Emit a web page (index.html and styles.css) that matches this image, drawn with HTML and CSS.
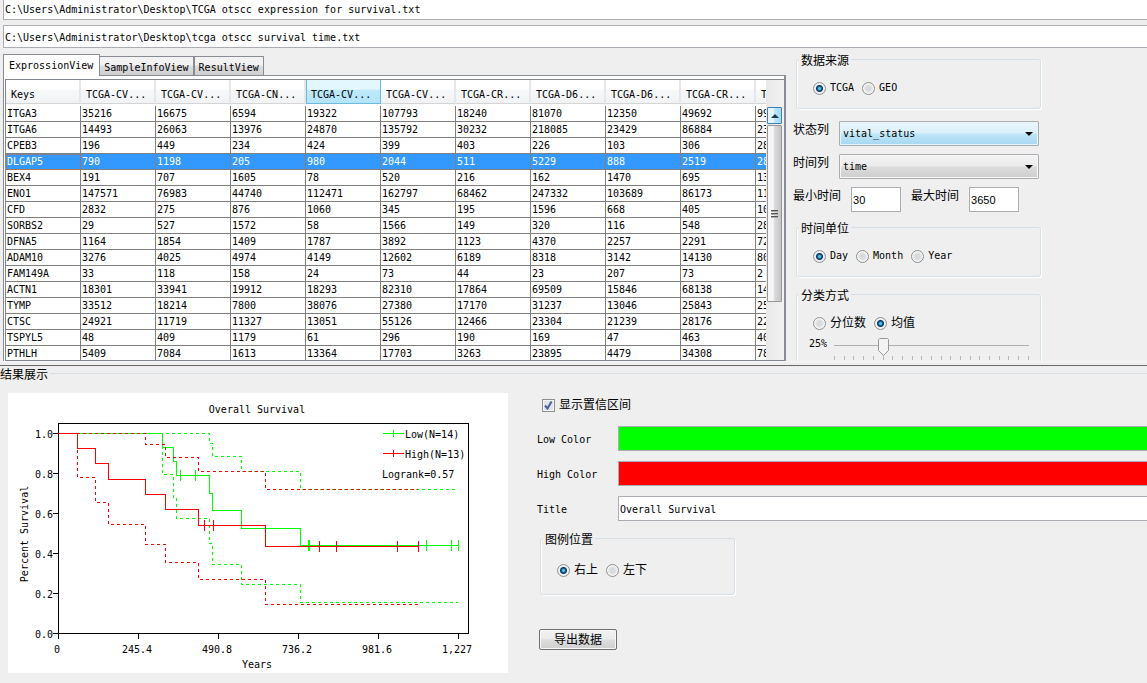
FILE: index.html
```html
<!DOCTYPE html>
<html lang="zh-CN">
<head>
<meta charset="utf-8">
<title>Survival Analysis</title>
<link rel="stylesheet" href="styles.css">
</head>
<body>
<section class="upper">
  <div class="paths">
    <input class="field path" type="text" aria-label="Expression file" value="C:\Users\Administrator\Desktop\TCGA otscc expression for survival.txt">
    <input class="field path" type="text" aria-label="Survival time file" value="C:\Users\Administrator\Desktop\tcga otscc survival time.txt">
  </div>
  <div class="workspace">
    <div class="tabs">
      <div class="tablist" role="tablist">
        <button class="tab active" role="tab" aria-selected="true">ExprossionView</button>
        <button class="tab" role="tab">SampleInfoView</button>
        <button class="tab" role="tab">ResultView</button>
      </div>
      <div class="tabpanel" role="tabpanel">
        <div class="grid">
          <div class="view">
            <table class="data">
              <thead><tr><th>Keys</th><th>TCGA-CV...</th><th>TCGA-CV...</th><th>TCGA-CN...</th><th class="hot">TCGA-CV...</th><th>TCGA-CV...</th><th>TCGA-CR...</th><th>TCGA-D6...</th><th>TCGA-D6...</th><th>TCGA-CR...</th><th>T</th></tr></thead>
              <tbody>
              <tr><td>ITGA3</td><td>35216</td><td>16675</td><td>6594</td><td>19322</td><td>107793</td><td>18240</td><td>81070</td><td>12350</td><td>49692</td><td>99</td></tr>
              <tr><td>ITGA6</td><td>14493</td><td>26063</td><td>13976</td><td>24870</td><td>135792</td><td>30232</td><td>218085</td><td>23429</td><td>86884</td><td>23</td></tr>
              <tr><td>CPEB3</td><td>196</td><td>449</td><td>234</td><td>424</td><td>399</td><td>403</td><td>226</td><td>103</td><td>306</td><td>28</td></tr>
              <tr class="selected"><td class="focus">DLGAP5</td><td>790</td><td>1198</td><td>205</td><td>980</td><td>2044</td><td>511</td><td>5229</td><td>888</td><td>2519</td><td>28</td></tr>
              <tr><td>BEX4</td><td>191</td><td>707</td><td>1605</td><td>78</td><td>520</td><td>216</td><td>162</td><td>1470</td><td>695</td><td>13</td></tr>
              <tr><td>ENO1</td><td>147571</td><td>76983</td><td>44740</td><td>112471</td><td>162797</td><td>68462</td><td>247332</td><td>103689</td><td>86173</td><td>11</td></tr>
              <tr><td>CFD</td><td>2832</td><td>275</td><td>876</td><td>1060</td><td>345</td><td>195</td><td>1596</td><td>668</td><td>405</td><td>10</td></tr>
              <tr><td>SORBS2</td><td>29</td><td>527</td><td>1572</td><td>58</td><td>1566</td><td>149</td><td>320</td><td>116</td><td>548</td><td>28</td></tr>
              <tr><td>DFNA5</td><td>1164</td><td>1854</td><td>1409</td><td>1787</td><td>3892</td><td>1123</td><td>4370</td><td>2257</td><td>2291</td><td>72</td></tr>
              <tr><td>ADAM10</td><td>3276</td><td>4025</td><td>4974</td><td>4149</td><td>12602</td><td>6189</td><td>8318</td><td>3142</td><td>14130</td><td>80</td></tr>
              <tr><td>FAM149A</td><td>33</td><td>118</td><td>158</td><td>24</td><td>73</td><td>44</td><td>23</td><td>207</td><td>73</td><td>2</td></tr>
              <tr><td>ACTN1</td><td>18301</td><td>33941</td><td>19912</td><td>18293</td><td>82310</td><td>17864</td><td>69509</td><td>15846</td><td>68138</td><td>14</td></tr>
              <tr><td>TYMP</td><td>33512</td><td>18214</td><td>7800</td><td>38076</td><td>27380</td><td>17170</td><td>31237</td><td>13046</td><td>25843</td><td>25</td></tr>
              <tr><td>CTSC</td><td>24921</td><td>11719</td><td>11327</td><td>13051</td><td>55126</td><td>12466</td><td>23304</td><td>21239</td><td>28176</td><td>22</td></tr>
              <tr><td>TSPYL5</td><td>48</td><td>409</td><td>1179</td><td>61</td><td>296</td><td>190</td><td>169</td><td>47</td><td>463</td><td>40</td></tr>
              <tr><td>PTHLH</td><td>5409</td><td>7084</td><td>1613</td><td>13364</td><td>17703</td><td>3263</td><td>23895</td><td>4479</td><td>34308</td><td>78</td></tr>
              </tbody>
            </table>
          </div>
          <div class="scrollbar">
            <button class="scroll-up" aria-label="Scroll up"><svg width="8" height="4" viewBox="0 0 8 4"><path d="M0 4L4 0l4 4z" fill="#1c3a52"/></svg></button>
            <div class="scroll-thumb"><svg width="7" height="8" viewBox="0 0 7 8"><path d="M0 .5h7M0 3.500h7M0 6.500h7" stroke="#555"/><path d="M0 1.500h7M0 4.500h7M0 7.500h7" stroke="#aaa"/></svg></div>
          </div>
        </div>
      </div>
    </div>
    <form class="settings">
      <fieldset class="group">
        <legend>数据来源</legend>
        <div class="options">
          <label class="option"><input type="radio" name="source" checked>TCGA</label>
          <label class="option"><input type="radio" name="source">GEO</label>
        </div>
      </fieldset>
      <div class="row first">
        <label class="caption" for="status">状态列</label>
        <span class="combo hot"><select id="status"><option>vital_status</option></select></span>
      </div>
      <div class="row">
        <label class="caption" for="time">时间列</label>
        <span class="combo"><select id="time"><option>time</option></select></span>
      </div>
      <div class="row times">
        <label class="caption" for="tmin">最小时间</label>
        <input class="field number" id="tmin" type="text" value="30">
        <label class="caption" for="tmax">最大时间</label>
        <input class="field number" id="tmax" type="text" value="3650">
      </div>
      <fieldset class="group">
        <legend>时间单位</legend>
        <div class="options">
          <label class="option"><input type="radio" name="unit" checked>Day</label>
          <label class="option"><input type="radio" name="unit">Month</label>
          <label class="option"><input type="radio" name="unit">Year</label>
        </div>
      </fieldset>
      <fieldset class="group classify">
        <legend>分类方式</legend>
        <div class="options">
          <label class="option"><input type="radio" name="split">分位数</label>
          <label class="option"><input type="radio" name="split" checked>均值</label>
        </div>
        <div class="quantile">
          <label for="quantile">25%</label>
          <div class="slider">
            <input id="quantile" type="range" min="0" max="100" value="25">
            <div class="ticks"><i></i><i></i><i></i><i></i><i></i><i></i><i></i><i></i><i></i><i></i><i></i><i></i><i></i><i></i><i></i><i></i><i></i><i></i><i></i><i></i><i></i></div>
          </div>
        </div>
      </fieldset>
    </form>
  </div>
</section>
<div class="splitter"></div>
<fieldset class="results">
  <legend>结果展示</legend>
  <div class="result-body">
    <svg class="chart" width="500" height="280" viewBox="0 0 500 280" role="img" aria-label="Overall Survival">
      <g class="frame">
        <path d="M50.500 30.500H460.500V240.500H50.500z"/>
        <path d="M45 40.500h5M45 80.500h5M45 120.500h5M45 160.500h5M45 200.500h5M45 240.500h5"/>
        <path d="M50.500 241v5M130.500 241v5M210.500 241v5M290.500 241v5M370.500 241v5M450.500 241v5"/>
      </g>
      <g class="low">
        <path d="M50 40.500H154.500V54.500H165.500V68.500H168.500V82.500H201.500V100.500H204.500V117.500H233.500V135.500H292.500V152.500H451"/>
        <path d="M172.500 77v11M187.500 77v11M300.500 147v11M301.500 147v11M418.500 147v11M443.500 147v11M450.500 147v11"/>
        <path class="ci" d="M50 40.500H201.500V50.500H204.500V63.500H233.500V78.500H292.500V96.500H450"/>
        <path class="ci" d="M154.500 41V81.500H165.500V105.500H168.500V125.500H201.500V150.500H204.500V171.500H233.500V191.500H292.500V209.500H450"/>
        <path d="M375 40.500h21M385.500 37v7"/>
      </g>
      <g class="high">
        <path d="M50 40.500H69.500V55.500H87.500V70.500H100.500V86.500H137.500V101.500H157.500V116.500H190.500V132.500H257.500V153.500H411"/>
        <path d="M196.500 127v11M205.500 127v11M311.500 148v11M328.500 148v11M389.500 148v11M410.500 148v11"/>
        <path class="ci" d="M69 40.500H137.500V51.500H157.500V64.500H190.500V78.500H257.500V96.500H410"/>
        <path class="ci" d="M69.500 57V84.500H87.500V109.500H100.500V131.500H137.500V151.500H157.500V169.500H190.500V186.500H257.500V211.500H410"/>
        <path d="M375 60.500h21M385.500 57v7"/>
      </g>
      <g class="text">
        <text x="249" y="20" text-anchor="middle">Overall Survival</text>
        <text x="397" y="45">Low(N=14)</text>
        <text x="397" y="65">High(N=13)</text>
        <text x="374" y="85">Logrank=0.57</text>
        <g text-anchor="end">
          <text x="45" y="45">1.0</text><text x="45" y="85">0.8</text><text x="45" y="125">0.6</text>
          <text x="45" y="165">0.4</text><text x="45" y="205">0.2</text><text x="45" y="245">0.0</text>
        </g>
        <g text-anchor="middle">
          <text x="49" y="260">0</text><text x="129" y="260">245.4</text><text x="209" y="260">490.8</text>
          <text x="289" y="260">736.2</text><text x="369" y="260">981.6</text><text x="449" y="260">1,227</text>
          <text x="249" y="275">Years</text>
          <text transform="translate(20 141) rotate(-90)">Percent Survival</text>
        </g>
      </g>
    </svg>
    <form class="controls">
      <label class="option show-ci"><input type="checkbox" checked>显示置信区间</label>
      <div class="props">
        <label for="low">Low Color</label><input class="field swatch-low" id="low" type="text" readonly>
        <label for="high">High Color</label><input class="field swatch-high" id="high" type="text" readonly>
        <label for="title">Title</label><input class="field" id="title" type="text" value="Overall Survival">
      </div>
      <fieldset class="group position">
        <legend>图例位置</legend>
        <div class="options">
          <label class="option"><input type="radio" name="pos" checked>右上</label>
          <label class="option"><input type="radio" name="pos">左下</label>
        </div>
      </fieldset>
      <button class="export" type="button">导出数据</button>
    </form>
  </div>
</fieldset>
</body>
</html>
```

FILE: styles.css
```css
* { box-sizing: border-box; }

body {
  margin: 0;
  height: 100vh;
  display: flex;
  flex-direction: column;
  overflow: hidden;
  background: #efefef;
  color: #000;
  font: 10px/14px "DejaVu Sans Mono", "Noto Sans CJK SC", monospace;
}

input, select, button { font: inherit; color: inherit; margin: 0; }

.field {
  height: 25px;
  padding: 1px 1px 0;
  border: 1px solid #abadb3;
  border-radius: 0;
  background: #fff;
  outline: 0;
}

.upper {
  flex: 1 1 0;
  min-height: 0;
  display: flex;
  flex-direction: column;
  overflow: hidden;
}

.paths { display: flex; flex-direction: column; gap: 5px; padding-left: 3px; }
.path { width: 100%; height: 23px; padding: 2px 1px 0; border-right: 0; }
.path:first-child { height: 20px; padding-top: 0; border-top: 0; }

.workspace { flex: 1; min-height: 0; display: flex; }

/* Tabs */
.tabs { flex: 1; min-width: 0; display: flex; flex-direction: column; padding: 6px 0 0 3px; }
.tablist { display: flex; align-items: flex-end; height: 22px; flex: none; }
.tab {
  height: 20px;
  padding: 3px 4px 0;
  border: 1px solid #898c95;
  border-left-width: 0;
  background: linear-gradient(#f2f2f2 0 45%, #dddddd 50%, #cfcfcf);
  white-space: nowrap;
}
.tab + .tab + .tab { border-left-width: 1px; }
.tab.active {
  position: relative;
  z-index: 1;
  height: 22px;
  padding: 0 6px 0 5px;
  border-left-width: 1px;
  border-bottom: 0;
  background: #fff;
}
.tabpanel {
  flex: 1;
  min-height: 0;
  display: flex;
  padding: 3px 0 0 1px;
  margin-top: -1px;
  border: solid #898c95;
  border-width: 1px 2px 0 1px;
  background: #fff;
}

/* Data grid */
.grid { flex: 1; min-width: 0; display: flex; border: solid #828790; border-width: 1px 0 1px 1px; overflow: hidden; }
.view { flex: 1; min-width: 0; overflow: hidden; }
.data { width: 825px; table-layout: fixed; border-collapse: separate; border-spacing: 0; }
.data th {
  height: 24px;
  padding: 6px 5px 0;
  border-right: 2px solid #e6e7e8;
  border-bottom: 1px solid #d5d5d5;
  background: linear-gradient(#fff 0 40%, #f7f8fa 45%, #f1f2f4);
  font-weight: 400;
  text-align: left;
  white-space: nowrap;
}
.data th.hot { padding-left: 4px; border: 1px solid #69bbe0; border-top: 0; background: linear-gradient(#e3f7ff 0 40%, #bde9fb 45%, #b4e4fa); }
.data thead::after { content: ""; display: block; height: 2px; }
.data td { height: 16px; padding: 1px 1px 0; border: solid #808080; border-width: 0 1px 1px 0; line-height: 14px; }
.selected { background: #3399ff; color: #fff; }
.data .focus { outline: 1px dotted #d2691e; outline-offset: -1px; }

.scrollbar { width: 18px; flex: none; padding: 27px 2px 0 1px; background: linear-gradient(90deg, #e8e8e8, #f2f2f2); }
.scroll-up { display: flex; align-items: center; justify-content: center; width: 100%; height: 17px; padding: 0; border: 1px solid #3c7fb1; border-radius: 1px; background: linear-gradient(90deg, #e3f4fc 0 45%, #bee6fd 50%, #a7d9f5); }
.scroll-thumb { display: flex; align-items: center; justify-content: center; height: 177px; margin-top: 1px; border: 1px solid #979797; border-radius: 1px; background: linear-gradient(90deg, #f5f5f5 0 40%, #dcdcde 50%, #c4c4c8); }

/* Settings */
.settings { width: 361px; flex: none; display: flex; flex-direction: column; gap: 8px; padding: 4px 0 0 7px; overflow: hidden; }
.group {
  flex: none;
  width: 245px;
  min-width: 0;
  margin: 0 0 0 3px;
  padding: 15px 16px 13px;
  border: 1px solid #d5dfe5;
  border-radius: 3px;
  box-shadow: inset 1px 0 #fff, 1px 1px #fff;
}
legend { height: 14px; margin-left: -14px; padding: 2px 2px 0; font-size: 12px; line-height: 14px; }
.options { display: flex; gap: 8px; height: 14px; align-items: center; }
.option { display: flex; gap: 4px; align-items: center; white-space: nowrap; }
.caption { font-size: 12px; }
.row { display: flex; align-items: flex-start; gap: 10px; height: 25px; }
.row.first { margin-top: 4px; }
.row > .caption { padding-top: 2px; }
.number { width: 50px; font-family: "Liberation Sans", Arial, sans-serif; font-size: 11px; }

.combo { position: relative; width: 200px; height: 25px; }
.combo select {
  appearance: none;
  width: 100%;
  height: 100%;
  padding: 1px 3px 0;
  border: 1px solid #abadb3;
  border-radius: 1px;
  background: linear-gradient(#f4f4f4, #ebebeb 48%, #dddddd 52%, #cdcdcd);
  box-shadow: inset 0 0 0 1px #f6f6f6;
}
.combo.hot select { background: linear-gradient(#ebf6fc, #d9f0fb 48%, #bee6f8 52%, #a7d7f0); box-shadow: inset 0 0 0 1px #e5f5fc; }
.combo::after {
  content: "";
  position: absolute;
  right: 6px;
  top: 11px;
  border: 4px solid transparent;
  border-top-color: #000;
  border-bottom: 0;
  pointer-events: none;
}

input[type="radio"] {
  appearance: none;
  width: 13px;
  height: 13px;
  border: 1px solid #8e8f8f;
  border-radius: 50%;
  background: radial-gradient(circle, #d8dbde 0 2px, #e6e8ea 4px, #f8f8f8 5px);
}
input[type="radio"]:checked { background: radial-gradient(circle, #58bdea 0 1px, #17608f 2px, #0b3556 3px, #eef1f3 4px); }
input[type="checkbox"] {
  appearance: none;
  width: 13px;
  height: 13px;
  border: 1px solid #8e8f8f;
  background: #dfe4ea url("data:image/svg+xml,%3Csvg xmlns='http://www.w3.org/2000/svg' viewBox='0 0 11 11'%3E%3Cpath d='M2 5.500L4.500 8.500 8.500 1.500' fill='none' stroke='%234b5f97' stroke-width='2'/%3E%3C/svg%3E");
  box-shadow: inset 0 0 0 1px #f4f4f4;
}

.classify { margin-top: 2px; }
.classify .option, .position .option, .show-ci { font-size: 12px; }
.quantile { display: flex; margin: 7px -12px 0 -4px; gap: 2px; }
.slider { width: 205px; flex: none; }
.slider input {
  display: block;
  appearance: none;
  width: 100%;
  height: 19px;
  background: linear-gradient(#aeb0b5, #aeb0b5) no-repeat center 8px / calc(100% - 10px) 1px;
}
.slider input::-webkit-slider-thumb {
  appearance: none;
  width: 11px;
  height: 18px;
  background: url("data:image/svg+xml,%3Csvg xmlns='http://www.w3.org/2000/svg' viewBox='0 0 11 18'%3E%3Cpath d='M1.500 .5h8l1 1v11l-5 5-5-5v-11z' fill='%23f3f3f3' stroke='%23999'/%3E%3C/svg%3E");
}
.ticks { display: flex; justify-content: space-between; margin: 0 5px; }
.ticks i { width: 1px; height: 4px; background: #b5b5b5; }

/* Results */
.splitter { flex: none; height: 5px; border-bottom: 1px solid #696969; border-top: 1px solid #f8f8f8; }
.results { flex: none; min-width: 0; margin: 0; padding: 13px 0 10px 8px; border: 0; border-top: 1px solid #d5dfe5; }
.results > legend { margin-left: -10px; }
.result-body { display: flex; gap: 29px; }
.chart { flex: none; background: #fff; }
.chart path { fill: none; stroke-width: 1; shape-rendering: crispEdges; }
.frame { stroke: #000; }
.low { stroke: #00ff00; }
.high { stroke: #ff0000; }
.ci { stroke-dasharray: 3 3; }

.controls { flex: 1; min-width: 0; display: flex; flex-direction: column; align-items: flex-start; }
.show-ci { margin: 5px 0 14px 5px; }
.props { display: grid; grid-template-columns: 81px 1fr; row-gap: 10px; align-items: center; width: 100%; }
.props label { padding-top: 2px; }
.props .field { width: 100%; border-right: 0; }
.field.swatch-low { background: #00ff00; }
.field.swatch-high { background: #ff0000; }
.position { width: 195px; margin-top: 10px; padding: 18px 16px 17px; }
.export {
  height: 21px;
  margin: 34px 0 0 2px;
  padding: 0 14px;
  border: 1px solid #707070;
  border-radius: 2px;
  background: linear-gradient(#f2f2f2, #ebebeb 48%, #dddddd 52%, #cfcfcf);
  box-shadow: inset 0 0 0 1px #f8f8f8;
  font-size: 12px;
  line-height: 18px;
}
```
